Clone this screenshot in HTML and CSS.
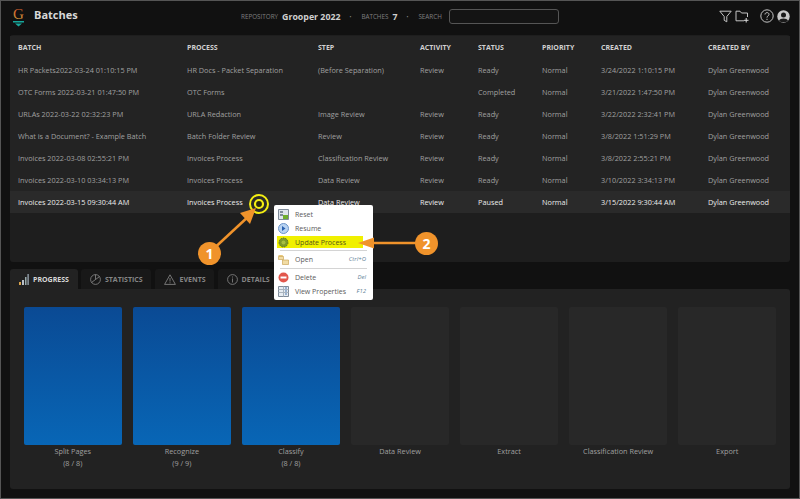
FILE: index.html
```html
<!DOCTYPE html>
<html lang="en">
<head>
<meta charset="utf-8">
<title>Batches</title>
<link rel="stylesheet" href="styles.css">
</head>
<body>
<div class="app">
  <header class="top">
    <div class="brand">
      <svg class="logo" width="13" height="20" viewBox="0 0 13 20">
        <defs><linearGradient id="g" x1="0" y1="0" x2="0" y2="1"><stop offset="0" stop-color="#d8502c"/><stop offset="1" stop-color="#c9a23a"/></linearGradient></defs>
        <text class="logo-g" x="6.500" y="12" text-anchor="middle" fill="url(#g)">G</text>
        <path d="M1 14 L12 14 L12 15.500 L1 15.500 Z M3 16.500 L10 16.500 L6.500 19.500 Z" fill="#17a79c"/>
      </svg>
      <h1 class="title">Batches</h1>
    </div>
    <div class="info">
      <span class="lbl">REPOSITORY</span><span class="val">Grooper 2022</span>
      <span class="dot">•</span>
      <span class="lbl">BATCHES</span><span class="val">7</span>
      <span class="dot">•</span>
      <span class="lbl">SEARCH</span><span class="search"></span>
    </div>
    <div class="tools">
      <svg width="13" height="13" viewBox="0 0 13 13" fill="none" stroke="#c4c4c4" stroke-width="1"><path d="M.8 1.200 H12.200 L7.800 6.500 V11.800 L5.200 10.300 V6.500 Z"/></svg>
      <svg class="t-folder" width="14" height="13" viewBox="0 0 14 13" fill="none" stroke="#c4c4c4" stroke-width="1"><path d="M9 10.800 H1 V1.200 H5 L6.500 3 H12.500 V7"/><path d="M11.200 8 V12.500 M9 10.300 H13.500" stroke="#ddd"/></svg>
      <svg class="t-help" width="14" height="14" viewBox="0 0 14 14" fill="none" stroke="#c4c4c4"><circle cx="7" cy="7" r="6.200"/><path d="M5 5.500 C5 3 9 3 9 5.400 C9 7 7 6.800 7 8.600"/><path d="M7 9.800 V11" /></svg>
      <svg width="13" height="13" viewBox="0 0 13 13"><circle cx="6.500" cy="6.500" r="6.200" fill="#c8c8c8"/><circle cx="6.500" cy="5" r="2.500" fill="#1a1a1a"/><path d="M2 10.800 C3 7.800 10 7.800 11 10.800 C9 12.800 4 12.800 2 10.800 Z" fill="#1a1a1a"/></svg>
    </div>
  </header>

  <section class="batches">
    <div class="row head"><span>BATCH</span><span>PROCESS</span><span>STEP</span><span>ACTIVITY</span><span>STATUS</span><span>PRIORITY</span><span>CREATED</span><span>CREATED BY</span></div>
    <div class="row"><span>HR Packets2022-03-24 01:10:15 PM</span><span>HR Docs - Packet Separation</span><span>(Before Separation)</span><span>Review</span><span>Ready</span><span>Normal</span><span>3/24/2022 1:10:15 PM</span><span>Dylan Greenwood</span></div>
    <div class="row"><span>OTC Forms 2022-03-21 01:47:50 PM</span><span>OTC Forms</span><span></span><span></span><span>Completed</span><span>Normal</span><span>3/21/2022 1:47:50 PM</span><span>Dylan Greenwood</span></div>
    <div class="row"><span>URLAs 2022-03-22 02:32:23 PM</span><span>URLA Redaction</span><span>Image Review</span><span>Review</span><span>Ready</span><span>Normal</span><span>3/22/2022 2:32:41 PM</span><span>Dylan Greenwood</span></div>
    <div class="row"><span>What is a Document? - Example Batch</span><span>Batch Folder Review</span><span>Review</span><span>Review</span><span>Ready</span><span>Normal</span><span>3/8/2022 1:51:29 PM</span><span>Dylan Greenwood</span></div>
    <div class="row"><span>Invoices 2022-03-08 02:55:21 PM</span><span>Invoices Process</span><span>Classification Review</span><span>Review</span><span>Ready</span><span>Normal</span><span>3/8/2022 2:55:21 PM</span><span>Dylan Greenwood</span></div>
    <div class="row"><span>Invoices 2022-03-10 03:34:13 PM</span><span>Invoices Process</span><span>Data Review</span><span>Review</span><span>Ready</span><span>Normal</span><span>3/10/2022 3:34:13 PM</span><span>Dylan Greenwood</span></div>
    <div class="row sel"><span>Invoices 2022-03-15 09:30:44 AM</span><span>Invoices Process</span><span>Data Review</span><span>Review</span><span>Paused</span><span>Normal</span><span>3/15/2022 9:30:44 AM</span><span>Dylan Greenwood</span></div>
  </section>

  <nav class="tabs">
    <div class="tab on">
      <svg width="10" height="11" viewBox="0 0 10 11"><path d="M0 8h2v3H0z" fill="#d8a24a"/><path d="M3 6h2v5H3z" fill="#b9c0c8"/><path d="M6 3h1.500v8H6z" fill="#9aa"/><path d="M8.300 0h1.700v11H8.300z" fill="#7d8790"/></svg>
      PROGRESS</div>
    <div class="tab">
      <svg width="11" height="11" viewBox="0 0 11 11" fill="none" stroke="#8c8c8c" stroke-width=".8"><circle cx="5.500" cy="5.500" r="4.900"/><path d="M5.500 5.500 L9.500 2.600 M5.500 5.500 L5.500 .6 M5.500 5.500 L1.500 8.500"/></svg>
      STATISTICS</div>
    <div class="tab">
      <svg width="12" height="11" viewBox="0 0 12 11" fill="none" stroke="#8c8c8c" stroke-width=".8"><path d="M6 .8 L11.400 10.400 H.6 Z"/><path d="M6 4 V7.500 M6 8.300 V9.300"/></svg>
      EVENTS</div>
    <div class="tab">
      <svg width="11" height="11" viewBox="0 0 11 11" fill="none" stroke="#8c8c8c" stroke-width=".8"><circle cx="5.500" cy="5.500" r="4.900"/><path d="M5.500 4.500 V8.500 M5.500 2.500 V3.500"/></svg>
      DETAILS</div>
  </nav>
  <section class="progress">
    <div class="step"><div class="tile done"></div><div class="cap">Split Pages<br>(8 / 8)</div></div>
    <div class="step"><div class="tile done"></div><div class="cap">Recognize<br>(9 / 9)</div></div>
    <div class="step"><div class="tile done"></div><div class="cap">Classify<br>(8 / 8)</div></div>
    <div class="step"><div class="tile"></div><div class="cap">Data Review</div></div>
    <div class="step"><div class="tile"></div><div class="cap">Extract</div></div>
    <div class="step"><div class="tile"></div><div class="cap">Classification Review</div></div>
    <div class="step"><div class="tile"></div><div class="cap">Export</div></div>
  </section>

  <svg class="marks" width="800" height="499" viewBox="0 0 800 499">
    <circle cx="259" cy="204" r="9" fill="none" stroke="#f4ee12" stroke-width="2"/>
    <circle cx="259" cy="204" r="4" fill="#2a2a10" stroke="#f4ee12" stroke-width="2.200"/>
  </svg>

  <div class="menu">
    <div class="mi"><svg width="11" height="11" viewBox="0 0 11 11"><path d="M.5.500h10v10H.500z" fill="#dfe5ec" stroke="#7f8b99"/><path d="M2 2h3v2H2zM2 5h3v2H2z" fill="#7f8b99"/><path d="M5 6h5v4H5z" fill="#6fae2e"/></svg><span>Reset</span></div>
    <div class="mi"><svg width="11" height="11" viewBox="0 0 11 11"><circle cx="5.500" cy="5.500" r="5" fill="#b8d3f2" stroke="#6c94c8"/><path d="M4 3v5l3.500-2.500z" fill="#2b62b0"/></svg><span>Resume</span></div>
    <div class="mi hl"><svg width="11" height="11" viewBox="0 0 11 11"><circle cx="5.500" cy="5.500" r="4.500" fill="#7e9a2a" stroke="#5c7420" stroke-dasharray="1.500 1"/><circle cx="5.500" cy="5.500" r="2" fill="#a7bf40"/></svg><span>Update Process</span></div>
    <div class="sep"></div>
    <div class="mi"><svg width="11" height="11" viewBox="0 0 11 11"><path d="M.5 1h4l1 1.500h-5z" fill="#e8c77a"/><path d="M.5 2.500h5v3h-5z" fill="#f1dca4" stroke="#c49a45" stroke-width=".6"/><path d="M4.500 6h6v4.500h-6z" fill="#f1dca4" stroke="#c49a45" stroke-width=".6"/></svg><span>Open</span><kbd>Ctrl+O</kbd></div>
    <div class="sep"></div>
    <div class="mi"><svg width="11" height="11" viewBox="0 0 11 11"><circle cx="5.500" cy="5.500" r="5" fill="#e2574c"/><path d="M2.500 4.500h6v2h-6z" fill="#fff"/></svg><span>Delete</span><kbd>Del</kbd></div>
    <div class="mi"><svg width="11" height="11" viewBox="0 0 11 11"><path d="M.5.500h10v10H.500z" fill="#e6ecf2" stroke="#7f8b99"/><path d="M.5 3.500h10M.5 6.500h10M5.500.500v10" stroke="#a9b4bf" fill="none"/><path d="M7 1.500h2v1H7zM7 4.500h2v1H7zM7 7.500h2v1H7z" fill="#4a78b0"/></svg><span>View Properties</span><kbd>F12</kbd></div>
  </div>

  <svg class="marks" width="800" height="499" viewBox="0 0 800 499">
    <path d="M209 253 L250 215" stroke="#f0932b" stroke-width="2.500" fill="none"/>
    <path d="M256 208 L240 213 L250 224 Z" fill="#f0932b"/>
    <path d="M373 243 H426" stroke="#f0932b" stroke-width="2.500" fill="none"/>
    <path d="M358 243 L374 237.500 V248.500 Z" fill="#f0932b"/>
  </svg>
  <div class="badge b1">1</div>
  <div class="badge b2">2</div>
</div>
</body>
</html>
```
FILE: styles.css
```css
* { box-sizing: border-box; }
html, body { margin: 0; padding: 0; }
body { width: 800px; height: 499px; overflow: hidden; background: #111; font-family: "Open Sans", "Liberation Sans", sans-serif; }
.app { position: relative; width: 800px; height: 499px; padding: 0 9px; background: #111; border: 1px solid #555; }

.top { display: flex; align-items: center; height: 33px; padding-bottom: 3px; }
.brand { display: flex; align-items: center; width: 231px; }
.logo { margin-left: 2px; margin-top: 2px; overflow: visible; }
.logo-g { font-family: "Liberation Serif", serif; font-size: 15px; font-weight: 400; }
.title { margin: 0 0 2px 9px; font-size: 11px; font-weight: 700; color: #d8d8d8; line-height: 14px; }
.info { display: flex; align-items: center; color: #8a8a8a; font-size: 6.300px; margin-top: 1px; }
.lbl { color: #7f7f7f; }
.val { color: #cfcfcf; font-size: 8.800px; font-weight: 700; margin-left: 4px; }
.dot { font-size: 5px; margin: 0 10px 0 9px; color: #888; }
.search { width: 110px; height: 15px; margin-left: 7px; border: 1px solid #555; border-radius: 3px; background: #141414; }
.tools { display: flex; align-items: center; margin-left: auto; }
.t-folder { margin-left: 3px; }
.t-help { margin-left: 11px; margin-right: 3px; }

.batches { height: 227px; margin-top: 1px; padding-top: 1px; background: #1e1e1e; border-radius: 3px; }
.row { display: grid; grid-template-columns: 169px 131px 102px 58px 64px 59px 107px 1fr; align-items: center; height: 22px; padding-left: 8px; font-size: 7.300px; color: #a0a0a0; background: #232323; }
.row span { white-space: nowrap; }
.head { height: 23px; color: #d0d0d0; font-weight: 700; font-size: 7px; }
.batches .sel { background: #2a2a2a; color: #ececec; }

.tabs { display: flex; height: 20px; margin-top: 7px; }
.tab { display: flex; align-items: center; gap: 4px; padding: 0 8px 0 9px; margin-right: 4px; background: #181818; color: #858585; font-size: 7px; font-weight: 700; border-radius: 3px 3px 0 0; }
.tab.on { background: #222; color: #d8d8d8; padding-right: 9px; margin-right: 3px; }

.progress { display: flex; gap: 11.500px; height: 200px; padding: 18px 14px 0; background: #222; border-radius: 0 3px 3px 3px; }
.step { flex: 1 1 0; text-align: center; color: #a0a0a0; font-size: 7.300px; line-height: 12px; }
.tile { height: 138px; background: #282828; border-radius: 2px; }
.tile.done { background: linear-gradient(#0a4a94, #0866b6); }

.marks { position: absolute; left: -1px; top: -1px; pointer-events: none; }

.menu { position: absolute; left: 273px; top: 204px; width: 99px; height: 95px; padding: 2px 3px 0; background: #fff; border-radius: 2px; color: #5a5a5a; font-size: 7px; }
.mi { display: flex; align-items: center; height: 14px; padding: 0 4px 0 1px; }
.mi svg { flex: none; margin-right: 6px; }
.mi span { flex: 1; }
.hl { width: 86px; height: 12px; margin: 1px 0; padding-right: 0; background: #f0f000; color: #55551a; }
.sep { height: 1px; margin: 2px 3px 1px 3px; background: #d4d4d4; }
.sep + .mi + .sep { margin-top: 2px; }
kbd { font: italic 6px "Open Sans", sans-serif; color: #5f7f98; }

.badge { position: absolute; width: 23px; height: 23px; border-radius: 50%; background: #f0932b; color: #fff; font-size: 14px; font-weight: 700; line-height: 23px; text-align: center; }
.b1 { left: 197px; top: 241px; }
.b2 { left: 414px; top: 231px; }
```
